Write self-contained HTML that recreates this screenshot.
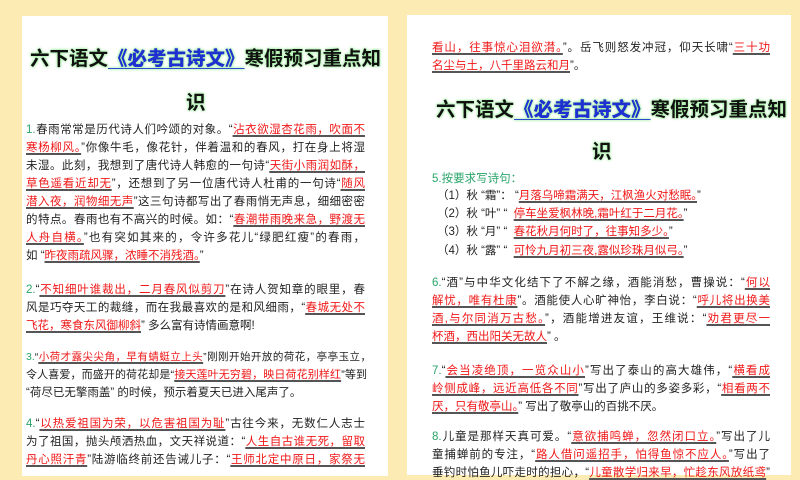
<!DOCTYPE html>
<html><head><meta charset="utf-8"><style>
body{margin:0;width:800px;height:475px;overflow:hidden;background:#fcecb4;position:relative;font-family:"Liberation Sans","Noto Sans CJK SC",sans-serif;}
.pg{position:absolute;background:#fff;}
.l{position:absolute;font-size:11.5px;line-height:14px;color:#222;white-space:nowrap;}
.j{text-align:justify;text-align-last:justify;white-space:normal;height:14px;overflow:hidden}
.r{color:#f01818;text-decoration:underline;text-decoration-color:#555;text-decoration-thickness:2px;text-underline-offset:2px;}
.n{color:#2aa56a;}
.t{position:absolute;font-size:19.5px;font-weight:bold;color:#111;text-shadow:0 0 3px #9e9,0 0 2px #9e9;white-space:nowrap;}
.t b{color:#1f2fd0;text-decoration:underline;text-decoration-color:#2a4bd0;text-underline-offset:3px;}
</style></head><body>
<div class="pg" style="left:22px;top:16px;width:366px;height:460px"></div>
<div class="pg" style="left:407px;top:15px;width:384px;height:460px"></div>

<div class="t" style="left:30px;top:42px">六下语文<b>《必考古诗文》</b>寒假预习重点知</div>
<div class="t" style="left:186px;top:86px">识</div>

<div class="l j" style="left:26px;top:123px;width:339px"><span class="n">1.</span>春雨常常是历代诗人们吟颂的对象。“<span class="r">沾衣欲湿杏花雨，吹面不</span></div>
<div class="l j" style="left:26px;top:141px;width:339px"><span class="r">寒杨柳风。</span>”你像牛毛，像花针，伴着温和的春风，打在身上将湿</div>
<div class="l j" style="left:26px;top:159px;width:339px">未湿。此刻，我想到了唐代诗人韩愈的一句诗“<span class="r">天街小雨润如酥，</span></div>
<div class="l j" style="left:26px;top:177px;width:339px"><span class="r">草色遥看近却无</span>”，还想到了另一位唐代诗人杜甫的一句诗“<span class="r">随风</span></div>
<div class="l j" style="left:26px;top:195px;width:339px"><span class="r">潜入夜，润物细无声</span>”这三句诗都写出了春雨悄无声息，细细密密</div>
<div class="l j" style="left:26px;top:213px;width:339px">的特点。春雨也有不高兴的时候。如：“<span class="r">春潮带雨晚来急，野渡无</span></div>
<div class="l j" style="left:26px;top:231px;width:339px"><span class="r">人舟自横。</span>”也有突如其来的，令许多花儿“绿肥红瘦”的春雨，</div>
<div class="l" style="left:26px;top:249px">如 “<span class="r">昨夜雨疏风骤，浓睡不消残酒。</span>”</div>

<div class="l j" style="left:26px;top:283px;width:339px"><span class="n">2.</span>“<span class="r">不知细叶谁裁出，二月春风似剪刀</span>”在诗人贺知章的眼里，春</div>
<div class="l j" style="left:26px;top:301px;width:339px">风是巧夺天工的裁缝，而在我最喜欢的是和风细雨，“<span class="r">春城无处不</span></div>
<div class="l" style="left:26px;top:319px"><span class="r">飞花，寒食东风御柳斜</span>” 多么富有诗情画意啊!</div>

<div class="l j" style="left:26px;top:350px;width:345px;font-size:10.5px"><span class="n">3.</span>“<span class="r">小荷才露尖尖角，早有蜻蜓立上头</span>”刚刚开始开放的荷花，亭亭玉立，</div>
<div class="l j" style="left:26px;top:368px;width:341px;font-size:11px">令人喜爱，而盛开的荷花却是“<span class="r">接天莲叶无穷碧，映日荷花别样红</span>”等到</div>
<div class="l" style="left:26px;top:386px">“荷尽已无擎雨盖” 的时候，预示着夏天已进入尾声了。</div>

<div class="l j" style="left:26px;top:417px;width:339px"><span class="n">4.</span>“<span class="r">以热爱祖国为荣，以危害祖国为耻</span>”古往今来，无数仁人志士</div>
<div class="l j" style="left:26px;top:435px;width:339px">为了祖国，抛头颅洒热血，文天祥说道：“<span class="r">人生自古谁无死，留取</span></div>
<div class="l j" style="left:26px;top:453px;width:339px"><span class="r">丹心照汗青</span>”陆游临终前还告诫儿子：“<span class="r">王师北定中原日，家祭无</span></div>

<div class="l j" style="left:432px;top:41px;width:338px"><span class="r">看山，往事惊心泪欲潸。</span>”。岳飞则怒发冲冠，仰天长啸“<span class="r">三十功</span></div>
<div class="l" style="left:432px;top:59px"><span class="r">名尘与土，八千里路云和月</span>”。</div>

<div class="t" style="left:436px;top:93px">六下语文<b>《必考古诗文》</b>寒假预习重点知</div>
<div class="t" style="left:592px;top:135px">识</div>

<div class="l n" style="left:432px;top:172px">5.按要求写诗句：</div>
<div class="l" style="left:437px;top:189px">（1）秋 “霜”： “<span class="r">月落乌啼霜满天，江枫渔火对愁眠。</span>”</div>
<div class="l" style="left:437px;top:207px">（2）秋 “叶” “ &nbsp;<span class="r">停车坐爱枫林晚,霜叶红于二月花。</span>”</div>
<div class="l" style="left:437px;top:225px">（3）秋 “月” “ &nbsp;<span class="r">春花秋月何时了，往事知多少。</span>”</div>
<div class="l" style="left:437px;top:244px">（4）秋 “露” “ &nbsp;<span class="r">可怜九月初三夜,露似珍珠月似弓。</span>”</div>

<div class="l j" style="left:432px;top:276px;width:338px"><span class="n">6.</span>“酒”与中华文化结下了不解之缘，酒能消愁，曹操说：“<span class="r">何以</span></div>
<div class="l j" style="left:432px;top:294px;width:338px"><span class="r">解忧，唯有杜康</span>”。酒能使人心旷神怡，李白说：“<span class="r">呼儿将出换美</span></div>
<div class="l j" style="left:432px;top:312px;width:338px"><span class="r">酒,与尔同消万古愁。</span>”，酒能增进友谊，王维说：“<span class="r">劝君更尽一</span></div>
<div class="l" style="left:432px;top:330px"><span class="r">杯酒，西出阳关无故人</span>” 。</div>

<div class="l j" style="left:432px;top:364px;width:338px"><span class="n">7.</span>“<span class="r">会当凌绝顶，一览众山小</span>”写出了泰山的高大雄伟，“<span class="r">横看成</span></div>
<div class="l j" style="left:432px;top:382px;width:338px"><span class="r">岭侧成峰，远近高低各不同</span>”写出了庐山的多姿多彩，“<span class="r">相看两不</span></div>
<div class="l" style="left:432px;top:400px"><span class="r">厌，只有敬亭山。</span>” 写出了敬亭山的百挑不厌。</div>

<div class="l j" style="left:432px;top:430px;width:338px"><span class="n">8.</span>儿童是那样天真可爱。“<span class="r">意欲捕鸣蝉，忽然闭口立。</span>”写出了儿</div>
<div class="l j" style="left:432px;top:448px;width:338px">童捕蝉前的专注，“<span class="r">路人借问遥招手，怕得鱼惊不应人。</span>”写出了</div>
<div class="l j" style="left:432px;top:466px;width:338px">垂钓时怕鱼儿吓走时的担心，“<span class="r">儿童散学归来早，忙趁东风放纸鸢</span>”</div>
</body></html>
